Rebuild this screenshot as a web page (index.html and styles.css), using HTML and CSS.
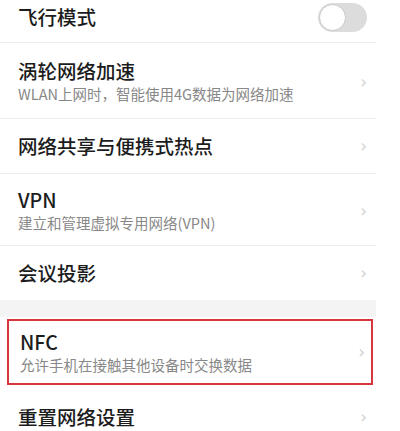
FILE: index.html
```html
<!DOCTYPE html>
<html lang="zh-CN">
<head>
    <meta charset="UTF-8">
    <meta name="viewport" content="width=device-width, initial-scale=1.0">
    <title>更多连接</title>
    <link rel="stylesheet" href="styles.css">
</head>
<body>
    <div class="list">
        <div class="row rowFirst">
            <div class="title">飞行模式</div>
            <div class="toggle"><span class="knob"></span></div>
        </div>
        <div class="row rowTwo">
            <div class="texts">
                <div class="title">涡轮网络加速</div>
                <div class="sub">WLAN上网时，智能使用4G数据为网络加速</div>
            </div>
            <span class="arrow">›</span>
        </div>
        <div class="row rowOne">
            <div class="title">网络共享与便携式热点</div>
            <span class="arrow">›</span>
        </div>
        <div class="row rowTwo vpn">
            <div class="texts">
                <div class="title">VPN</div>
                <div class="sub">建立和管理虚拟专用网络(VPN)</div>
            </div>
            <span class="arrow">›</span>
        </div>
        <div class="row rowOne last">
            <div class="title">会议投影</div>
            <span class="arrow">›</span>
        </div>
        <div class="band"></div>
        <div class="row nfc">
            <div class="texts">
                <div class="title">NFC</div>
                <div class="sub">允许手机在接触其他设备时交换数据</div>
            </div>
            <span class="arrow">›</span>
        </div>
        <div class="row rowOne reset">
            <div class="title">重置网络设置</div>
            <span class="arrow">›</span>
        </div>
    </div>
</body>
</html>
```

FILE: styles.css
```css
* {
    margin: 0;
    padding: 0;
    box-sizing: border-box;
}

body {
    background: #fff;
    font-family: "Noto Sans CJK SC", "Noto Sans", sans-serif;
    color: #222;
    width: 400px;
    height: 431px;
    overflow: hidden;
}

.list {
    width: 376px;
    display: flex;
    flex-direction: column;
}

.row {
    display: flex;
    align-items: center;
    justify-content: space-between;
    padding: 0 9px 0 18px;
    border-bottom: 1px solid #ededed;
}

.rowFirst {
    height: 43px;
    padding-bottom: 8px;
    padding-right: 0;
}

.rowOne {
    height: 55px;
}

.rowTwo {
    height: 76px;
    padding-top: 2px;
}

.vpn {
    height: 72px;
}

.last {
    height: 54px;
    border-bottom: none;
}

.title {
    font-size: 19.5px;
    line-height: 24px;
    font-weight: 500;
    color: #1c1c1c;
}

.sub {
    font-size: 14.5px;
    line-height: 20px;
    color: #888;
    margin-top: 1px;
}

.arrow {
    color: #d2d2d2;
    font-family: "DejaVu Sans", sans-serif;
    font-size: 17px;
    line-height: 20px;
}

.toggle {
    width: 49px;
    height: 29px;
    border-radius: 15px;
    background: #dcdcdc;
    display: flex;
    align-items: center;
    padding: 0 1px;
    margin-right: 9px;
}

.knob {
    width: 27px;
    height: 27px;
    border-radius: 50%;
    background: #fff;
    border: 1px solid #c9c9c9;
}

.band {
    height: 17px;
    background: #f4f4f4;
}

.nfc {
    height: 66px;
    margin: 2px 3px 0 7px;
    padding: 0 6px 0 11px;
    border: 2px solid #d8363f;
}

.reset {
    height: 60px;
    padding-top: 4px;
    border-bottom: none;
}
```
